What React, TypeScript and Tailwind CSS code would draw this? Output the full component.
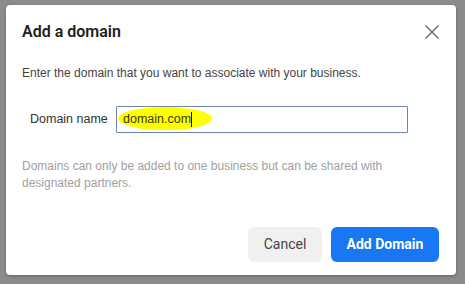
import React from 'react';

const App: React.FC = () => {
  return (
    <div className="w-[465px] h-[284px] bg-[#8b8b8b] pt-[5px] pl-[6px] overflow-hidden">
      <div className="w-[450px] h-[270px] bg-white rounded-[4px] shadow-[0_1px_3px_rgba(0,0,0,0.3)] flex flex-col font-['Liberation_Sans',Arial,sans-serif]">
        {/* Header */}
        <div className="flex items-center justify-between pl-[16px] pr-[16px] pt-[11px] h-[42px]">
          <h2 className="text-[16px] leading-[20px] font-semibold text-[#1c1e21] font-['Roboto','Liberation_Sans',sans-serif]">
            Add a domain
          </h2>
          <svg width="14" height="14" viewBox="0 0 14 14" className="mr-[1px]">
            <path d="M1 1 L13 13 M13 1 L1 13" stroke="#666" strokeWidth="1.4" strokeLinecap="round" />
          </svg>
        </div>

        {/* Body */}
        <p className="pl-[16px] mt-[18px] text-[12px] leading-[16px] text-[#444]">
          Enter the domain that you want to associate with your business.
        </p>

        <div className="flex items-center mt-[25px] pl-[24px]">
          <label className="text-[12.5px] text-[#333] w-[86px]">Domain name</label>
          <div className="relative w-[292px] h-[27px] border border-[#6b85ae] rounded-[1px] flex items-center">
            <div className="absolute left-[1px] top-[0px] w-[94px] h-[23px] bg-[#ffff00] rounded-[50%]" />
            <span className="relative pl-[6px] text-[12.5px] text-[#3a3a10]">domain.com</span>
            <span className="relative w-px h-[15px] bg-[#111]" />
          </div>
        </div>

        <p className="pl-[16px] pr-[40px] mt-[25px] text-[12px] leading-[17px] text-[#a0a0a0]">
          Domains can only be added to one business but can be shared with designated partners.
        </p>

        {/* Footer */}
        <div className="flex justify-end gap-[9px] pr-[17px] mt-auto mb-[13px] font-['Roboto','Liberation_Sans',sans-serif]">
          <button className="w-[74px] h-[35px] rounded-[6px] bg-[#f0f0f0] text-[14px] text-[#444]">
            Cancel
          </button>
          <button className="w-[108px] h-[35px] rounded-[6px] bg-[#1877f2] text-[14px] font-bold text-white">
            Add Domain
          </button>
        </div>
      </div>
    </div>
  );
};

export default App;
